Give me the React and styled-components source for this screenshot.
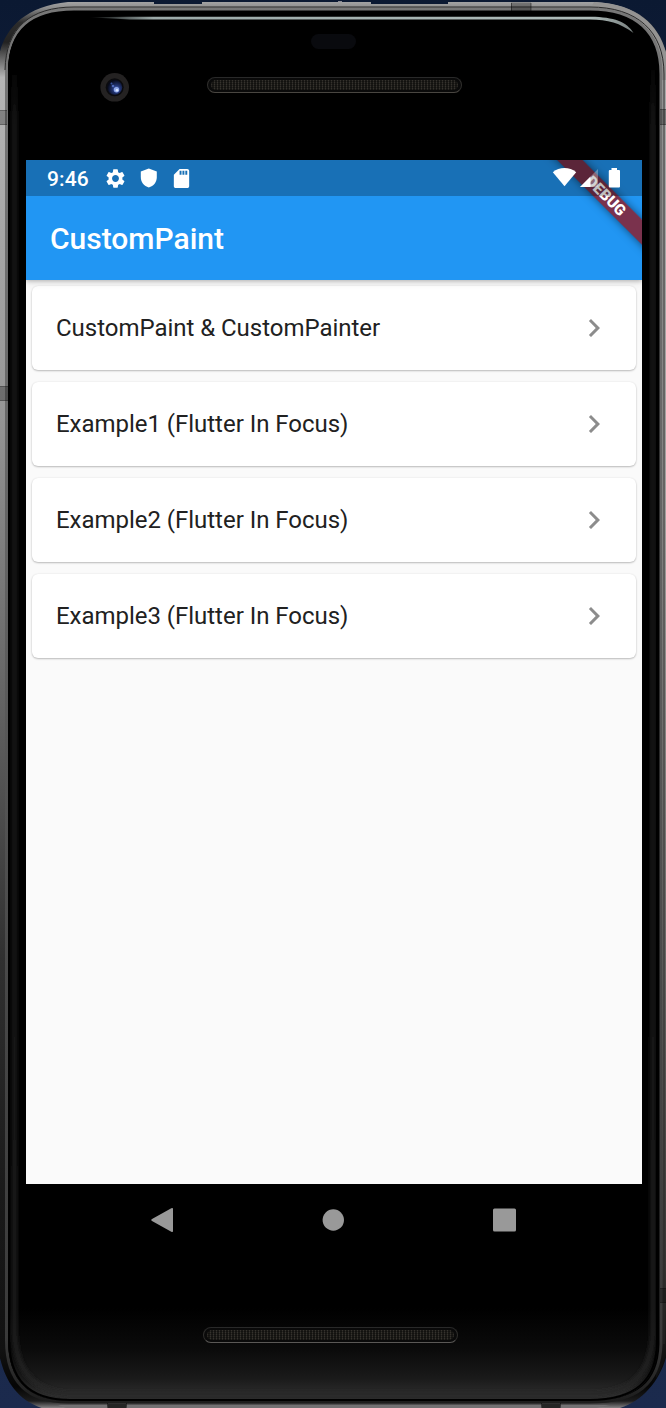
import React from "react";
import styled, { createGlobalStyle } from "styled-components";
import { MdSettings, MdSdCard, MdChevronRight } from "react-icons/md";

const GlobalStyle = createGlobalStyle`
  * { box-sizing: border-box; }
  body { margin: 0; background: #0c1830; font-family: Roboto, "Liberation Sans", sans-serif; }
`;

const Device = styled.main`
  position: relative;
  width: 666px;
  height: 1408px;
  display: flex;
  flex-direction: column;
  padding: 0 24px 0 26px;
  overflow: hidden;
  background: linear-gradient(#0b1932 0%, #0f1c38 10%, #1b2a4d 100%);
`;

const FrameArt = styled.svg`
  position: absolute;
  inset: 0;
`;

const TopBezel = styled.header`
  position: relative;
  height: 160px;
  flex: none;
  padding-top: 34px;
  display: grid;
  grid-template-columns: 74px 31px 1fr;
  grid-template-rows: 15px auto;
`;

const Sensor = styled.div`
  grid-column: 1 / -1;
  width: 45px;
  height: 15px;
  margin-left: 285px;
  border-radius: 8px;
  background: #090a0e;
`;

const Camera = styled.svg`
  grid-column: 2;
  margin: 23px 0 0 0;
`;

const Speaker = styled.div`
  width: 255px;
  height: 16px;
  margin: ${(p) => p.$margin};
  border: 1px solid #302f2d;
  border-top-color: #292929;
  border-bottom: 1.5px solid ${(p) => p.$rim};
  border-radius: 8px;
  padding: 2px 3px;
  background: #0a0a0a;

  &::before {
    content: "";
    display: block;
    height: 100%;
    border-radius: 5px;
    background:
      repeating-linear-gradient(0deg, rgba(0, 0, 0, 0.3) 0 1px, transparent 1px 2px),
      repeating-linear-gradient(90deg, #35322d 0 1px, #1a1916 1px 3px);
  }
`;

const Screen = styled.section`
  position: relative;
  height: 1024px;
  flex: none;
  overflow: hidden;
  background: #fafafa;
`;

const AppBar = styled.div`
  position: relative;
  height: 120px;
  padding: 36px 24px 0;
  display: flex;
  align-items: center;
  background: #2196f3;
  box-shadow: 0 1px 4px rgba(0, 0, 0, 0.22), 0 3px 8px rgba(0, 0, 0, 0.1);
`;

const Title = styled.h1`
  margin: 0;
  padding-top: 1px;
  color: #fff;
  font-size: 30px;
  font-weight: 500;
  line-height: 35px;
  letter-spacing: 0;
`;

const List = styled.ul`
  list-style: none;
  margin: 0;
  padding: 6px;
  display: flex;
  flex-direction: column;
  gap: 12px;
`;

const Card = styled.li`
  height: 84px;
  padding: 0 24px;
  display: flex;
  align-items: center;
  justify-content: space-between;
  border-radius: 6px;
  background: #fff;
  box-shadow: 0 1px 2px rgba(0, 0, 0, 0.24), 0 0 2px rgba(0, 0, 0, 0.08);
  color: #212121;
  font-size: 24px;
  line-height: 28px;

  svg { color: #8c8c8c; }
`;

const Label = styled.span`
  letter-spacing: -0.03px;
`;

const Ribbon = styled.div`
  position: absolute;
  top: 42px;
  right: -70px;
  width: 140px;
  height: 18px;
  transform-origin: 70px -42px;
  transform: rotate(45deg);
  background: rgba(142, 28, 40, 0.82);
  box-shadow: 0 0 9px rgba(0, 0, 0, 0.5);
  color: #fff;
  font-size: 15.3px;
  font-weight: 900;
  line-height: 18px;
  text-align: center;
`;

const StatusBar = styled.div`
  position: absolute;
  top: 0;
  left: 0;
  right: 0;
  height: 36px;
  padding: 0 21px;
  display: flex;
  align-items: center;
  background: rgba(0, 0, 0, 0.25);
  color: #fff;
`;

const Time = styled.span`
  width: 57px;
  padding-top: 2px;
  font-size: 21px;
  font-weight: 500;
  line-height: 25px;
  letter-spacing: 0.15px;
`;

const Notifications = styled.div`
  display: flex;
  align-items: center;
  gap: 11.7px;
  svg { display: block; }
`;

const SystemIcons = styled.svg`
  margin-left: auto;
`;

const NavBar = styled.nav`
  position: relative;
  height: 72px;
  flex: none;
  display: flex;
  justify-content: space-between;
  align-items: center;
  padding: 0 126.500px 0 125px;
`;

const Chin = styled.footer`
  position: relative;
`;

const items = [
  "CustomPaint & CustomPainter",
  "Example1 (Flutter In Focus)",
  "Example2 (Flutter In Focus)",
  "Example3 (Flutter In Focus)",
];

function Frame() {
  return (
    <FrameArt width="666" height="1408" viewBox="0 0 666 1408" fill="none">
      <defs>
        <linearGradient id="metal" x1="0" y1="0" x2="0" y2="1408" gradientUnits="userSpaceOnUse">
          <stop offset="0" stopColor="#aaa" />
          <stop offset=".006" stopColor="#8a8a8a" />
          <stop offset=".016" stopColor="#2c2c2c" />
          <stop offset=".03" stopColor="#222" />
          <stop offset=".055" stopColor="#b5b5b5" />
          <stop offset=".3" stopColor="#949494" />
          <stop offset=".5" stopColor="#626262" />
          <stop offset=".68" stopColor="#303030" />
          <stop offset=".85" stopColor="#191919" />
          <stop offset=".96" stopColor="#111" />
          <stop offset=".985" stopColor="#050505" />
          <stop offset=".995" stopColor="#1c1c1c" />
          <stop offset="1" stopColor="#858385" />
        </linearGradient>
        <linearGradient id="metalRight" x1="0" y1="60" x2="0" y2="1360" gradientUnits="userSpaceOnUse">
          <stop offset="0" stopColor="#aaa" />
          <stop offset=".35" stopColor="#a19f9d" />
          <stop offset=".7" stopColor="#686664" />
          <stop offset=".93" stopColor="#353331" />
          <stop offset="1" stopColor="#111" />
        </linearGradient>
        <linearGradient id="rim" x1="0" y1="0" x2="0" y2="1408" gradientUnits="userSpaceOnUse">
          <stop offset="0" stopColor="#777" />
          <stop offset=".4" stopColor="#626262" />
          <stop offset=".7" stopColor="#484848" />
          <stop offset=".95" stopColor="#3a3a3a" />
          <stop offset="1" stopColor="#1a1a1a" />
        </linearGradient>
        <linearGradient id="chin" x1="0" y1="1308" x2="0" y2="1402" gradientUnits="userSpaceOnUse">
          <stop offset="0" stopColor="#000" />
          <stop offset=".45" stopColor="#0b0b0b" />
          <stop offset=".75" stopColor="#1a1a1a" />
          <stop offset=".93" stopColor="#2d2d2d" />
          <stop offset="1" stopColor="#282828" />
        </linearGradient>
        <linearGradient id="sheen" x1="0" y1="60" x2="0" y2="1408" gradientUnits="userSpaceOnUse">
          <stop offset="0" stopColor="#222" stopOpacity="0" />
          <stop offset=".05" stopColor="#202020" />
          <stop offset="1" stopColor="#262626" />
        </linearGradient>
        <linearGradient id="shine" x1="88" y1="0" x2="634" y2="0" gradientUnits="userSpaceOnUse">
          <stop offset="0" stopColor="#9caaa9" stopOpacity="0" />
          <stop offset=".12" stopColor="#9caaa9" />
          <stop offset=".92" stopColor="#aebbb9" />
          <stop offset="1" stopColor="#777f7e" />
        </linearGradient>
        <filter id="soft" x="-20" y="0" width="706" height="1408" filterUnits="userSpaceOnUse">
          <feGaussianBlur stdDeviation="2" />
        </filter>
        <clipPath id="glass">
          <path d="M8 72C8 32 30 12 76 12H586C634 12 658 34 658 78V1342C658 1380 636 1401 590 1401H70C28 1401 8 1380 8 1338Z" />
        </clipPath>
      </defs>
      <path d="M-1 56C4 30 24 6 68 2H154V4H202V2H371V4H448V2H596C640 5 660 26 667 56V1354C660 1382 640 1405 612 1410H48C18 1402 5 1382-1 1354Z" fill="url(#metal)" />
      <path d="M663 65H666V1354C663 1364 660 1372 656 1378Z" fill="url(#metalRight)" />
      <path d="M594 2C640 5 660 26 667 56V80H661C661 32 636 9 590 9Z" fill="#949392" />
      <path d="M6.500 70C7 29 30 9 74 9H590C636 9 661 32 661 74V1344C660 1384 637 1402 590 1402H68C26 1402 6.500 1380 6.500 1340Z" stroke="url(#rim)" strokeWidth="3" fill="#000" />
      <path d="M5 70C6 28 30 7 74 7H590C637 7 664 31 664 74V1344" stroke="#292929" strokeWidth="1" />
      <g clipPath="url(#glass)">
        <path d="M0 0H666V1408H0Z" fill="#000" />
        <path d="M8 1308H658V1402H8Z" fill="url(#chin)" />
        <path d="M14.500 70V1330C15 1370 34 1392 70 1394H590C632 1394 652 1374 653 1330V66" stroke="url(#sheen)" strokeWidth="4" filter="url(#soft)" />
        <path d="M8 74C8 32 30 12 76 12H586C634 12 658 34 658 78V1342C658 1380 636 1401 590 1401H70C28 1401 8 1380 8 1338Z" stroke="#000" strokeWidth="4" />
      </g>
      <path d="M88 17.300L128 16.800H591C614 17 627 22 633.500 33C620 23 608 19.500 590 19.500H130Z" fill="url(#shine)" />
      <path d="M0 111H7V124H0ZM0 387H8V400H0ZM660 110H666V124H660ZM660 1289H666V1302H660ZM511 2.500H531V11H511Z" fill="#000" fillOpacity=".27" />
      <path d="M0 110.500H7M0 124.500H7M0 386.500H8M0 400.500H8M660 109.500H666M660 124.500H666M660 1288.500H666M660 1302.500H666M511.500 3V11M531 3V11M107.500 1403V1408M126.500 1403V1408M541.500 1403V1408M560.500 1403V1408" stroke="#000" strokeOpacity=".45" />
      <path d="M58 1405H107V1408H66ZM127 1405H541V1408H127ZM561 1405H610L596 1408H561Z" fill="#737173" />
      <path d="M108 1404H126V1408H108ZM542 1404H560V1408H542Z" fill="#252525" />
      <path d="M338 1H342V2H338Z" fill="#8b8b95" />
    </FrameArt>
  );
}

export default function App() {
  return (
    <>
      <GlobalStyle />
      <Device>
        <Frame />
        <TopBezel>
          <Sensor />
          <Camera width="30" height="30" viewBox="0 0 30 30">
            <defs>
              <radialGradient id="lens" cx=".62" cy=".62" r=".6">
                <stop offset="0" stopColor="#627fd5" />
                <stop offset=".4" stopColor="#223575" />
                <stop offset="1" stopColor="#070a19" />
              </radialGradient>
            </defs>
            <circle cx="14.700" cy="15.300" r="14.300" fill="#242222" />
            <circle cx="14.700" cy="15.300" r="9" fill="#0b0b0e" />
            <circle cx="14.700" cy="15.300" r="7.500" fill="url(#lens)" />
            <circle cx="16.500" cy="17.800" r="2.700" fill="#8fa8ea" />
            <circle cx="17" cy="18.200" r="1.300" fill="#dbe6ff" />
            <circle cx="13" cy="14" r="1.300" fill="#506bbc" />
            <circle cx="11.500" cy="11.500" r="1" fill="#36519c" />
          </Camera>
          <Speaker $rim="#494641" $margin="28px 0 0 76px" />
        </TopBezel>
        <Screen>
          <AppBar>
            <Title>CustomPaint</Title>
          </AppBar>
          <List>
            {items.map((label) => (
              <Card key={label}>
                <Label>{label}</Label>
                <MdChevronRight size={36} />
              </Card>
            ))}
          </List>
          <Ribbon>DEBUG</Ribbon>
          <StatusBar>
            <Time>9:46</Time>
            <Notifications>
              <MdSettings size={23} />
              <svg width="20" height="22" viewBox="0 0 20 22" fill="currentColor">
                <path d="M9.800 1.500L17.800 4.500V10C17.800 15.300 14.600 19 9.800 20.500C5 19 1.800 15.300 1.800 10V4.500Z" />
              </svg>
              <MdSdCard size={23} />
            </Notifications>
            <SystemIcons width="69" height="22" viewBox="0 0 69 22" fill="currentColor">
              <path d="M.800 5.300C7.500-.300 17.500-.300 24.200 5.300L12.500 19.300Z" />
              <path d="M46 2V20H28Z" fillOpacity=".3" />
              <path d="M38.500 9.500V20H28Z" />
              <path d="M59.500 1H65V3H67Q68 3 68 4V19.500Q68 20.500 67 20.500H57.800Q56.800 20.500 56.800 19.500V4Q56.800 3 57.800 3H59.500Z" />
            </SystemIcons>
          </StatusBar>
        </Screen>
        <NavBar>
          <svg width="23" height="26" viewBox="0 0 23 26" fill="#999">
            <path d="M20.300 1.200Q22 .300 22 2V24Q22 25.700 20.300 24.700L1 14Q-.500 13 1 12Z" />
          </svg>
          <svg width="22" height="22" viewBox="0 0 22 22" fill="#999">
            <circle cx="11.300" cy="11" r="10.700" />
          </svg>
          <svg width="23" height="24" viewBox="0 0 23 24" fill="#999">
            <rect y=".500" width="23" height="23" rx="1.500" />
          </svg>
        </NavBar>
        <Chin>
          <Speaker $rim="#5a5856" $margin="71px 0 0 177px" />
        </Chin>
      </Device>
    </>
  );
}
